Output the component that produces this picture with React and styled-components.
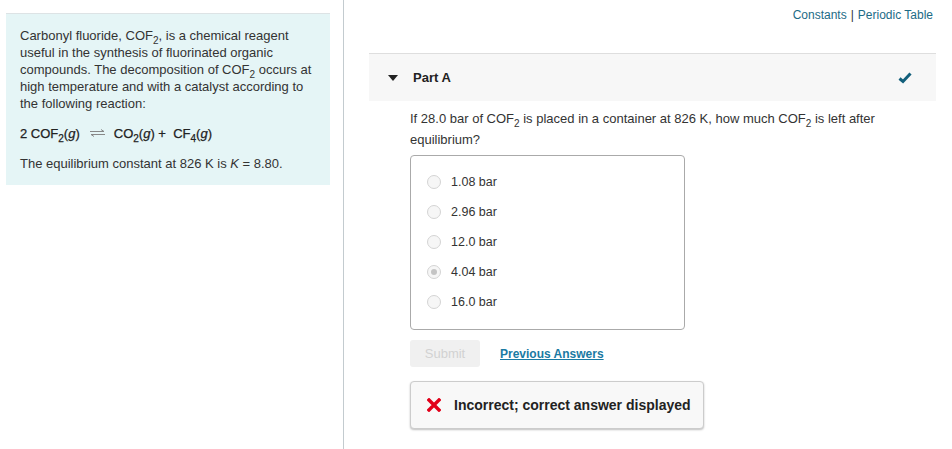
import React from "react";
import styled, { createGlobalStyle } from "styled-components";

const GlobalStyle = createGlobalStyle`
  body {
    margin: 0;
    background: #fff;
    font-family: "Liberation Sans", Arial, sans-serif;
    color: #333;
  }
`;

const options = [
  { label: "1.08 bar" },
  { label: "2.96 bar" },
  { label: "12.0 bar" },
  { label: "4.04 bar", checked: true },
  { label: "16.0 bar" },
];

const EqArrow = () => (
  <svg width="17" height="8" viewBox="0 0 17 8" style={{ margin: "0 8px 0 9px", verticalAlign: "1px" }}>
    <path d="M1 2.5 H15 L12 0.5" fill="none" stroke="#888" strokeWidth="1" />
    <path d="M16 5.5 H2 L5 7.5" fill="none" stroke="#888" strokeWidth="1" />
  </svg>
);

const App = () => {
  return (
    <Page>
      <GlobalStyle />
      <LeftColumn>
        <InfoPanel>
          <Paragraph>
            Carbonyl fluoride, COF<Sub>2</Sub>, is a chemical reagent useful in the synthesis of
            fluorinated organic compounds. The decomposition of COF<Sub>2</Sub> occurs at high
            temperature and with a catalyst according to the following reaction:
          </Paragraph>
          <Equation>
            2 COF<Sub>2</Sub>(<i>g</i>)
            <EqArrow />
            CO<Sub>2</Sub>(<i>g</i>) + &nbsp;CF<Sub>4</Sub>(<i>g</i>)
          </Equation>
          <Paragraph>
            The equilibrium constant at 826 K is <i>K</i> = 8.80.
          </Paragraph>
        </InfoPanel>
      </LeftColumn>

      <RightColumn>
        <TopLinks>
          <LinkText>Constants</LinkText>
          <Pipe>|</Pipe>
          <LinkText>Periodic Table</LinkText>
        </TopLinks>

        <PartHeader>
          <Caret />
          <PartTitle>Part A</PartTitle>
          <svg width="14" height="12" viewBox="0 0 14 12">
            <path d="M1.5 6.5 L5 9.5 L12.5 1.5" fill="none" stroke="#125f7b" strokeWidth="3" strokeLinejoin="miter" />
          </svg>
        </PartHeader>

        <PartBody>
          <Question>
            If 28.0 bar of COF<Sub>2</Sub> is placed in a container at 826 K, how much COF<Sub>2</Sub> is
            left after equilibrium?
          </Question>

          <ChoiceBox>
            {options.map((o) => (
              <Choice key={o.label}>
                <Radio $checked={o.checked} />
                {o.label}
              </Choice>
            ))}
          </ChoiceBox>

          <Actions>
            <SubmitButton disabled>Submit</SubmitButton>
            <PrevLink>Previous Answers</PrevLink>
          </Actions>

          <Feedback>
            <svg width="14" height="14" viewBox="0 0 14 14">
              <path d="M2 2 L12 12 M12 2 L2 12" stroke="#e2001a" strokeWidth="3.4" strokeLinecap="square" />
            </svg>
            <FeedbackText>Incorrect; correct answer displayed</FeedbackText>
          </Feedback>
        </PartBody>
      </RightColumn>
    </Page>
  );
};

export default App;

const Page = styled.div`
  display: flex;
  width: 952px;
  height: 449px;
  overflow: hidden;
`;

const LeftColumn = styled.div`
  width: 344px;
  flex-shrink: 0;
  box-sizing: border-box;
  padding: 13px 13px 0 6px;
  border-right: 1px solid #c3cbcf;
`;

const InfoPanel = styled.div`
  background: #e5f5f6;
  border-top: 1px solid #dde3e5;
  padding: 13px 14px 13px 14px;
  font-size: 13px;
  line-height: 17px;
  color: #333;
`;

const Paragraph = styled.p`
  margin: 0;
`;

const Sub = styled.sub`
  font-size: 10px;
  line-height: 0;
  vertical-align: -4px;
`;

const Equation = styled.div`
  margin: 13px 0 13px;
  color: #222;
  font-size: 13px;
  -webkit-text-stroke: 0.25px #222;
  i {
    font-style: italic;
  }
`;

const RightColumn = styled.div`
  flex: 1;
  display: flex;
  flex-direction: column;
  padding: 0 16px 0 25px;
`;

const TopLinks = styled.div`
  display: flex;
  justify-content: flex-end;
  align-items: center;
  height: 53px;
  padding-bottom: 24px;
  box-sizing: border-box;
  font-size: 12px;
  margin-right: 3px;
`;

const LinkText = styled.span`
  color: #1c6b86;
`;

const Pipe = styled.span`
  color: #333;
  margin: 0 4px;
`;

const PartHeader = styled.div`
  display: flex;
  align-items: center;
  height: 47px;
  background: #f7f7f7;
  border-top: 1px solid #dedede;
  padding: 0 24px 0 19px;
`;

const Caret = styled.span`
  width: 0;
  height: 0;
  border-left: 5px solid transparent;
  border-right: 5px solid transparent;
  border-top: 6px solid #222;
  margin-right: 15px;
`;

const PartTitle = styled.span`
  flex: 1;
  font-weight: bold;
  font-size: 13px;
  color: #222;
`;

const PartBody = styled.div`
  padding: 7px 0 0 41px;
`;

const Question = styled.p`
  margin: 0 0 5px;
  font-size: 13px;
  line-height: 21px;
  width: 490px;
  color: #333;
`;

const ChoiceBox = styled.div`
  width: 275px;
  height: 175px;
  box-sizing: border-box;
  border: 1px solid #aaa;
  border-radius: 4px;
  padding: 17px 0 0 16px;
  display: flex;
  flex-direction: column;
  gap: 12px;
`;

const Choice = styled.label`
  display: flex;
  align-items: center;
  height: 18px;
  font-size: 12.5px;
  color: #333;
`;

const Radio = styled.span`
  width: 12px;
  height: 12px;
  border-radius: 50%;
  border: 1px solid #d4d4d4;
  background: #f6f6f6;
  margin-right: 10px;
  position: relative;
  &::after {
    content: "";
    display: ${(p) => (p.$checked ? "block" : "none")};
    position: absolute;
    left: 3px;
    top: 3px;
    width: 6px;
    height: 6px;
    border-radius: 50%;
    background: #c4c4c4;
  }
`;

const Actions = styled.div`
  display: flex;
  align-items: center;
  margin-top: 10px;
`;

const SubmitButton = styled.button`
  width: 70px;
  height: 27px;
  border: none;
  border-radius: 3px;
  background: #f0f0f0;
  color: #d2d2d2;
  font-family: inherit;
  font-size: 13px;
`;

const PrevLink = styled.a`
  margin-left: 20px;
  font-size: 12px;
  font-weight: bold;
  color: #1a7aa3;
  text-decoration: underline;
`;

const Feedback = styled.div`
  display: flex;
  align-items: center;
  margin-top: 14px;
  width: 294px;
  height: 48px;
  box-sizing: border-box;
  padding-left: 16px;
  border: 1px solid #ccc;
  border-radius: 4px;
  background: #f8f8f8;
  box-shadow: 0 1px 2px rgba(0, 0, 0, 0.25);
`;

const FeedbackText = styled.span`
  margin-left: 13px;
  font-size: 14px;
  font-weight: bold;
  color: #222;
`;
